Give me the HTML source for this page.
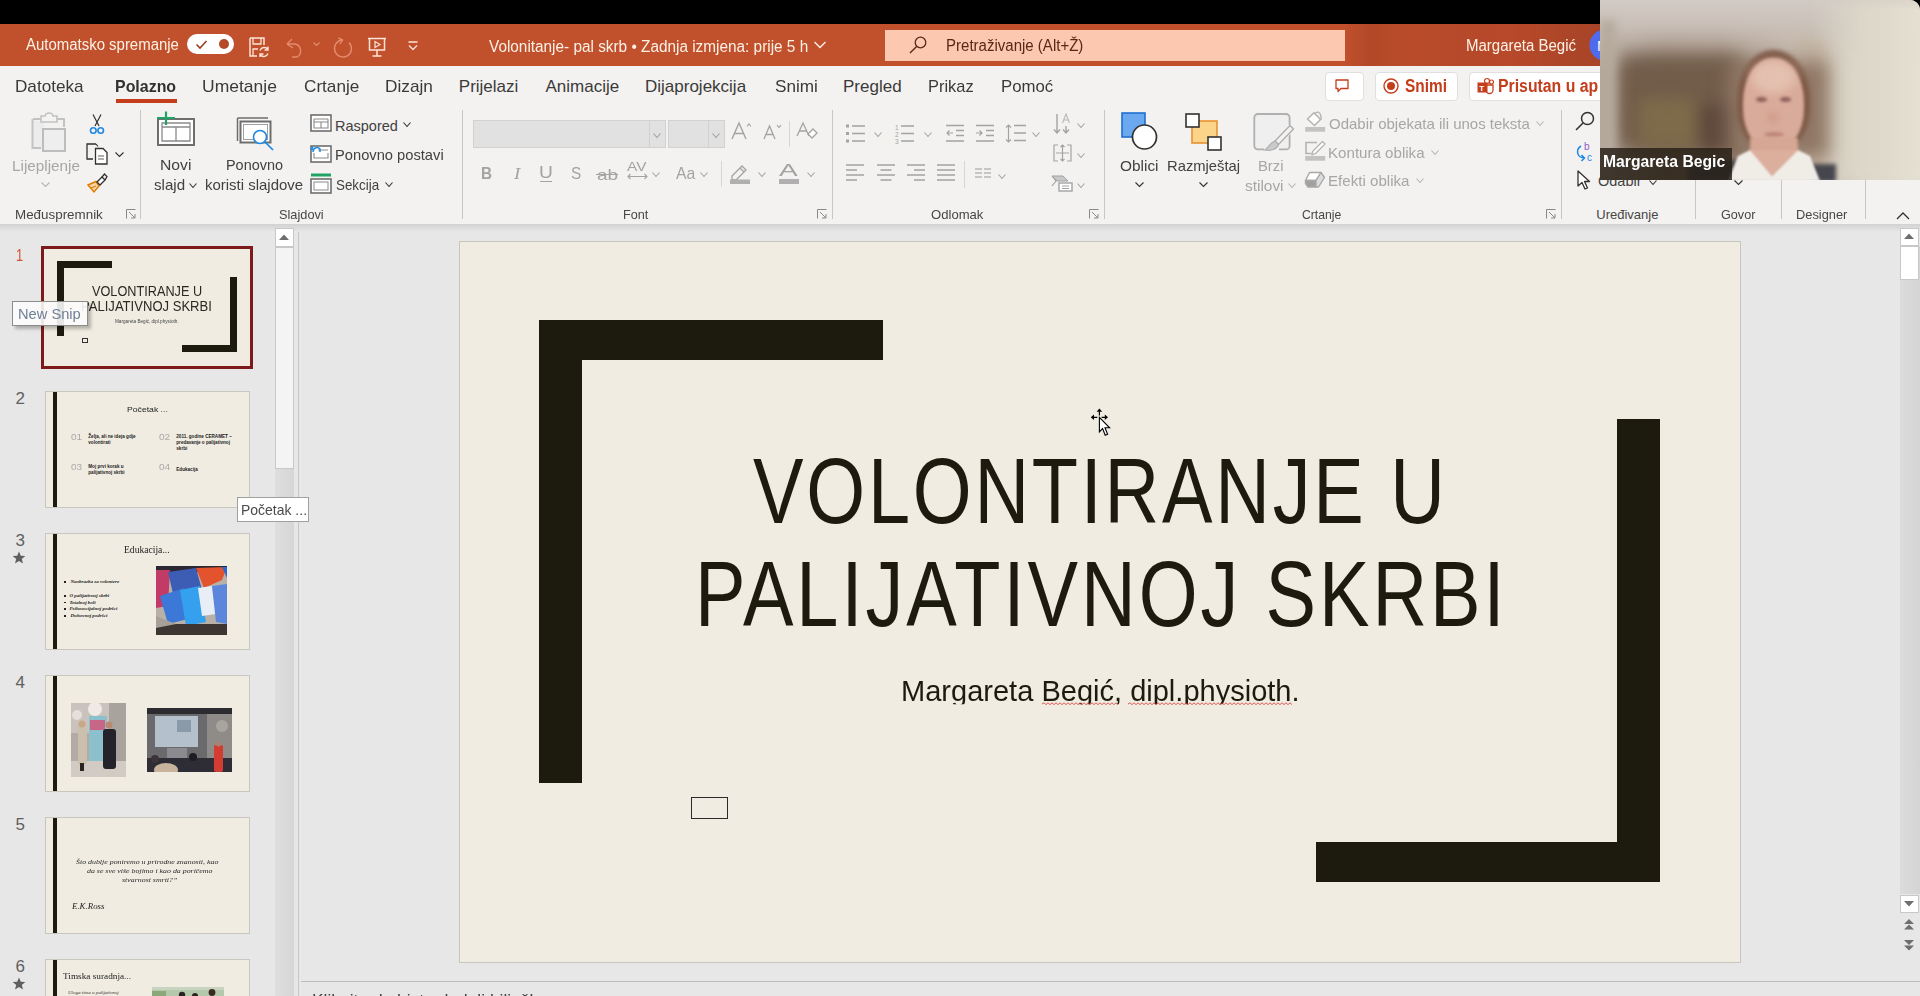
<!DOCTYPE html>
<html><head><meta charset="utf-8">
<style>
*{margin:0;padding:0;box-sizing:border-box}
html,body{width:1920px;height:996px;overflow:hidden;background:#e7e7e8;font-family:"Liberation Sans",sans-serif;color:#262626;position:relative}
.a{position:absolute}
.t{position:absolute;white-space:nowrap;transform-origin:0 0}
svg.a{overflow:visible}
</style></head><body>
<div class="a" style="left:0px;top:0px;width:1920px;height:24px;background:#000"></div><div class="a" style="left:0px;top:24px;width:1920px;height:42px;background:#c1502c"></div><div class="a" style="left:0px;top:66px;width:1920px;height:158px;background:#f3f2f1"></div><div class="a" style="left:0px;top:224px;width:1920px;height:8px;background:linear-gradient(#d2d2d2,#e7e7e8)"></div><div class="a" style="left:1345px;top:24px;width:255px;height:42px;background:linear-gradient(90deg,#c1502c 0%,#b24828 10%,#ba4c2a 25%,#b5492a 45%,#b8492a 65%,#ad4628 85%,#a84428 100%)"></div><div class="t " style="left:26.00px;top:37.45px;font-size:16px;line-height:16px;color:#fdf1e6;transform:scaleX(0.9344);">Automatsko spremanje</div><svg class="a" style="left:187px;top:34px;" width="47" height="20" viewBox="0 0 47 20"><rect x="0" y="0" width="47" height="20" rx="10" fill="#fff"/><path d="M9.5 10.5 L13 14 L19.5 7" fill="none" stroke="#9b3f22" stroke-width="1.6"/><circle cx="37" cy="10" r="5" fill="#b54a28"/></svg><svg class="a" style="left:249px;top:37px;" width="21" height="20" viewBox="0 0 21 20"><path d="M1 1 H15 V8 M1 1 V19 H8" fill="none" stroke="#fbe3d6" stroke-width="1.5"/><path d="M4 1 V7 H12 V1" fill="none" stroke="#fbe3d6" stroke-width="1.3"/><path d="M4 19 V12 H9" fill="none" stroke="#fbe3d6" stroke-width="1.3"/><path d="M11 13.5 A4.5 4.5 0 0 1 19 12.5 M19 9.5 V13 H15.5 M19 16.5 A4.5 4.5 0 0 1 11 17.5 M11 20 V17 H14.5" fill="none" stroke="#fbe3d6" stroke-width="1.4"/></svg><svg class="a" style="left:285px;top:37px;" width="20" height="21" viewBox="0 0 20 21"><path d="M2 7 L7 2 M2 7 L8 11 M2 7 H10 A7 7 0 0 1 12 20 L7 20" fill="none" stroke="#e48b6d" stroke-width="1.4"/></svg><svg class="a" style="left:313px;top:42px;" width="7" height="5" viewBox="0 0 7 5"><path d="M0.5 0.5 L3.5 3.5 L6.5 0.5" fill="none" stroke="#e48b6d" stroke-width="1.2"/></svg><svg class="a" style="left:332px;top:37px;" width="21" height="21" viewBox="0 0 21 21"><path d="M10.5 3 A8.5 8.5 0 1 0 17 5.5" fill="none" stroke="#e48b6d" stroke-width="1.4"/><path d="M6.5 1 L10.5 3 L8 7" fill="none" stroke="#e48b6d" stroke-width="1.4"/></svg><svg class="a" style="left:367px;top:37px;" width="20" height="20" viewBox="0 0 20 20"><path d="M1 1.5 H19 M2.5 1.5 V13 H17.5 V1.5" fill="none" stroke="#fbe3d6" stroke-width="1.5"/><path d="M8 4.5 L13 7.5 L8 10.5 Z" fill="none" stroke="#fbe3d6" stroke-width="1.2"/><path d="M10 13 V19 M5.5 19 H14.5" fill="none" stroke="#fbe3d6" stroke-width="1.5"/></svg><svg class="a" style="left:408px;top:41px;" width="10" height="10" viewBox="0 0 10 10"><path d="M0.5 1 H9.5 M1 4.5 L5 8.5 L9 4.5" fill="none" stroke="#fbe3d6" stroke-width="1.3"/></svg><div class="t " style="left:488.70px;top:39.45px;font-size:16px;line-height:16px;color:#fdf1e6;transform:scaleX(0.9588);">Volonitanje- pal skrb • Zadnja izmjena: prije 5 h</div><svg class="a" style="left:814px;top:41px;" width="12" height="8" viewBox="0 0 12 8"><path d="M0.5 1 L6 6.5 L11.5 1" fill="none" stroke="#fdf1e6" stroke-width="1.4"/></svg><div class="a" style="left:885px;top:30px;width:460px;height:31px;background:#fdc8b0"></div><svg class="a" style="left:909px;top:36px;" width="18" height="18" viewBox="0 0 18 18"><circle cx="11.5" cy="6.5" r="5.3" fill="none" stroke="#5a2717" stroke-width="1.3"/><path d="M7.6 10.4 L1 17" stroke="#5a2717" stroke-width="1.4"/></svg><div class="t " style="left:945.56px;top:37.75px;font-size:16px;line-height:16px;color:#5a2717;transform:scaleX(0.9390);">Pretraživanje (Alt+Ž)</div><div class="t " style="left:1465.76px;top:37.95px;font-size:16px;line-height:16px;color:#fdf1e6;transform:scaleX(0.9374);">Margareta Begić</div><svg class="a" style="left:1589px;top:29px;" width="32" height="32" viewBox="0 0 32 32"><circle cx="16" cy="16" r="15.5" fill="#4f6bed"/><text x="8" y="22" font-size="15" fill="#fff" font-family="Liberation Sans">M</text></svg><div class="t " style="left:15.29px;top:77.91px;font-size:17px;line-height:17px;color:#3b3a39;transform:scaleX(1.0076);">Datoteka</div><div class="t " style="left:115.06px;top:77.91px;font-size:17px;line-height:17px;color:#323130;font-weight:bold;transform:scaleX(0.9375);">Polazno</div><div class="t " style="left:201.97px;top:77.91px;font-size:17px;line-height:17px;color:#3b3a39;transform:scaleX(1.0294);">Umetanje</div><div class="t " style="left:303.70px;top:77.91px;font-size:17px;line-height:17px;color:#3b3a39;transform:scaleX(1.0083);">Crtanje</div><div class="t " style="left:384.79px;top:77.91px;font-size:17px;line-height:17px;color:#3b3a39;transform:scaleX(1.0134);">Dizajn</div><div class="t " style="left:458.80px;top:77.91px;font-size:17px;line-height:17px;color:#3b3a39;">Prijelazi</div><div class="t " style="left:545.50px;top:77.91px;font-size:17px;line-height:17px;color:#3b3a39;">Animacije</div><div class="t " style="left:645.00px;top:77.91px;font-size:17px;line-height:17px;color:#3b3a39;">Dijaprojekcija</div><div class="t " style="left:774.70px;top:77.91px;font-size:17px;line-height:17px;color:#3b3a39;transform:scaleX(1.0088);">Snimi</div><div class="t " style="left:843.00px;top:77.91px;font-size:17px;line-height:17px;color:#3b3a39;">Pregled</div><div class="t " style="left:928.33px;top:77.91px;font-size:17px;line-height:17px;color:#3b3a39;transform:scaleX(0.9665);">Prikaz</div><div class="t " style="left:1000.91px;top:77.91px;font-size:17px;line-height:17px;color:#3b3a39;transform:scaleX(0.9865);">Pomoć</div><div class="a" style="left:116px;top:99px;width:61px;height:3.5px;background:#c43e1c"></div><div class="a" style="left:1325px;top:72px;width:39px;height:29px;background:#fff;border:1px solid #e1dfdd;border-radius:4px"></div><svg class="a" style="left:1335px;top:79px;" width="14" height="14" viewBox="0 0 14 14"><path d="M1 1 H13 V9.5 H6 L3 12.5 V9.5 H1 Z" fill="none" stroke="#c43e1c" stroke-width="1.3" stroke-linejoin="round"/></svg><div class="a" style="left:1375px;top:72px;width:83px;height:29px;background:#fff;border:1px solid #e1dfdd;border-radius:4px"></div><svg class="a" style="left:1383px;top:78px;" width="16" height="16" viewBox="0 0 16 16"><circle cx="8" cy="8" r="7" fill="none" stroke="#c43e1c" stroke-width="1.4"/><circle cx="8" cy="8" r="4" fill="#c43e1c"/></svg><div class="t " style="left:1404.70px;top:76.56px;font-size:18px;line-height:18px;color:#c43e1c;font-weight:bold;transform:scaleX(0.8561);">Snimi</div><div class="a" style="left:1469px;top:72px;width:200px;height:29px;background:#fff;border:1px solid #e1dfdd;border-radius:4px"></div><svg class="a" style="left:1477px;top:78px;" width="17" height="16" viewBox="0 0 17 16"><rect x="0.5" y="4.5" width="10" height="10" fill="#c43e1c"/><circle cx="10" cy="3" r="2.5" fill="none" stroke="#c43e1c" stroke-width="1.2"/><circle cx="14.5" cy="4" r="2" fill="none" stroke="#c43e1c" stroke-width="1.2"/><path d="M9 7 H16 V12 A3.5 3.5 0 0 1 9 12" fill="none" stroke="#c43e1c" stroke-width="1.3"/><text x="2.3" y="12.5" font-size="8" font-weight="bold" fill="#fff" font-family="Liberation Sans">T</text></svg><div class="t " style="left:1497.82px;top:76.56px;font-size:18px;line-height:18px;color:#c43e1c;font-weight:bold;transform:scaleX(0.8786);">Prisutan u ap</div><svg class="a" style="left:31px;top:113px;" width="36" height="39" viewBox="0 0 36 39"><path d="M2 6 H10 M26 6 H33 V14" fill="none" stroke="#c2c2c2" stroke-width="2"/><path d="M1.5 6 V35 H10" fill="none" stroke="#c2c2c2" stroke-width="2"/><rect x="3" y="8" width="10" height="26" fill="#ececec"/><path d="M10 9 V3 H14 A4 3 0 0 1 22 3 H26 V9 Z" fill="#f3f3f3" stroke="#c2c2c2" stroke-width="1.6"/><rect x="12" y="16" width="22" height="22" fill="#eeeeee" stroke="#bdbdbd" stroke-width="2"/></svg><div class="t " style="left:11.65px;top:158.52px;font-size:14.5px;line-height:14.5px;color:#a6a6a6;transform:scaleX(1.0532);">Lijepljenje</div><svg class="a" style="left:41px;top:182px;" width="9" height="5" viewBox="0 0 9 5"><path d="M0.5 0.5 L4.5 4.5 L8.5 0.5" fill="none" stroke="#b5b5b5" stroke-width="1.1"/></svg><svg class="a" style="left:89px;top:114px;" width="16" height="21" viewBox="0 0 16 21"><path d="M4 0.5 L10 12 M12 0.5 L6 12" fill="none" stroke="#323130" stroke-width="1.2"/><circle cx="4.3" cy="16.5" r="2.8" fill="none" stroke="#1e88e5" stroke-width="1.6"/><circle cx="11.7" cy="16.5" r="2.8" fill="none" stroke="#1e88e5" stroke-width="1.6"/></svg><svg class="a" style="left:86px;top:143px;" width="22" height="22" viewBox="0 0 22 22"><path d="M10 1 H1 V16 H7" fill="none" stroke="#323130" stroke-width="1.3"/><path d="M10 1 L12 3.5" fill="none" stroke="#323130" stroke-width="1.2"/><path d="M9.5 5.5 H17 L21 9.5 V21 H9.5 Z" fill="#fff" stroke="#323130" stroke-width="1.3"/><path d="M12 13 H18 M12 16 H18" stroke="#605e5c" stroke-width="1.2"/></svg><svg class="a" style="left:115px;top:152px;" width="9" height="5" viewBox="0 0 9 5"><path d="M0.5 0.5 L4.5 4.5 L8.5 0.5" fill="none" stroke="#323130" stroke-width="1.1"/></svg><svg class="a" style="left:86px;top:173px;" width="22" height="20" viewBox="0 0 22 20"><path d="M2 12 L10 8.5 L13 13 L8 19 Z" fill="#fbd5a6" stroke="#e07b00" stroke-width="1.4"/><path d="M5 15 L10 13" stroke="#e07b00" stroke-width="1.2"/><path d="M11 9 L16 4 L19 7 L14 12 Z" fill="#fff" stroke="#323130" stroke-width="1.3"/><path d="M16 4 L18.5 1 L21 3.5 L19 7" fill="none" stroke="#323130" stroke-width="1.3"/></svg><div class="t " style="left:15.27px;top:207.89px;font-size:13px;line-height:13px;color:#484644;transform:scaleX(1.0300);">Međuspremnik</div><svg class="a" style="left:126px;top:209px;" width="10" height="10" viewBox="0 0 10 10"><path d="M0.5 0.5 H9.5 M0.5 0.5 V9.5" fill="none" stroke="#8a8886" stroke-width="1"/><path d="M3 3 L9 9 M5 9 H9 V5" fill="none" stroke="#8a8886" stroke-width="1"/></svg><div class="a" style="left:140px;top:110px;width:1px;height:109px;background:#c8c6c4"></div><svg class="a" style="left:156px;top:111px;" width="40" height="36" viewBox="0 0 40 36"><rect x="2" y="8" width="36" height="26" fill="#fff" stroke="#6e6e6e" stroke-width="2"/><path d="M6 12 H34 V30 H6 Z M20 16 V30 M6 16 H34" fill="none" stroke="#8a8a8a" stroke-width="1.3"/><path d="M10 0.5 V14 M1 7 H19" stroke="#21a366" stroke-width="2.2"/></svg><div class="t " style="left:160.42px;top:158.02px;font-size:14.5px;line-height:14.5px;color:#424140;transform:scaleX(1.0833);">Novi</div><div class="t " style="left:154.00px;top:177.72px;font-size:14.5px;line-height:14.5px;color:#424140;transform:scaleX(1.0418);">slajd</div><svg class="a" style="left:189px;top:183px;" width="8" height="5" viewBox="0 0 8 5"><path d="M0.5 0.5 L4.0 4.5 L7.5 0.5" fill="none" stroke="#323130" stroke-width="1.1"/></svg><svg class="a" style="left:236px;top:117px;" width="41" height="36" viewBox="0 0 41 36"><path d="M1.5 1 H32 M1.5 1 V24" fill="none" stroke="#6e6e6e" stroke-width="1.5"/><rect x="4.5" y="4.5" width="30" height="21" fill="#fff" stroke="#6e6e6e" stroke-width="2"/><rect x="7.5" y="7.5" width="24" height="15" fill="#fff" stroke="#a0a0a0" stroke-width="1"/><circle cx="24" cy="20" r="6.5" fill="#fff" stroke="#1e88e5" stroke-width="1.6"/><path d="M28.5 24.5 L37 33" stroke="#1e88e5" stroke-width="1.7"/></svg><div class="t " style="left:225.80px;top:158.02px;font-size:14.5px;line-height:14.5px;color:#424140;transform:scaleX(0.9950);">Ponovno</div><div class="t " style="left:205.30px;top:177.72px;font-size:14.5px;line-height:14.5px;color:#424140;transform:scaleX(1.0313);">koristi slajdove</div><svg class="a" style="left:310px;top:114px;" width="22" height="19" viewBox="0 0 22 19"><rect x="1" y="1" width="20" height="16" fill="#fff" stroke="#6e6e6e" stroke-width="1.6"/><path d="M4 5 H18 M4 5 V14 H18 V5 M11 8 V14 M4 8 H18" fill="none" stroke="#8a8a8a" stroke-width="1.1"/></svg><div class="t " style="left:335.00px;top:118.52px;font-size:14.5px;line-height:14.5px;color:#424140;">Raspored</div><svg class="a" style="left:403px;top:122px;" width="8" height="5" viewBox="0 0 8 5"><path d="M0.5 0.5 L4.0 4.5 L7.5 0.5" fill="none" stroke="#323130" stroke-width="1.1"/></svg><svg class="a" style="left:310px;top:143px;" width="22" height="20" viewBox="0 0 22 20"><rect x="1" y="3" width="20" height="16" fill="#fff" stroke="#6e6e6e" stroke-width="1.6"/><path d="M8 7 H18 M4 10 V15 H18 V10" fill="none" stroke="#8a8a8a" stroke-width="1.1"/><path d="M3 9 A4 4 0 0 1 10 6 L10 9 M3 3.5 L1.5 6 L4.5 7" fill="none" stroke="#1e88e5" stroke-width="1.5"/></svg><div class="t " style="left:334.99px;top:148.22px;font-size:14.5px;line-height:14.5px;color:#424140;transform:scaleX(1.0133);">Ponovno postavi</div><svg class="a" style="left:310px;top:173px;" width="22" height="21" viewBox="0 0 22 21"><rect x="1" y="0.5" width="20" height="3" fill="#21a366"/><rect x="1" y="6" width="20" height="14" fill="#fff" stroke="#6e6e6e" stroke-width="1.6"/><rect x="4" y="9" width="14" height="8" fill="none" stroke="#8a8a8a" stroke-width="1"/></svg><div class="t " style="left:336.00px;top:177.72px;font-size:14.5px;line-height:14.5px;color:#424140;transform:scaleX(0.9228);">Sekcija</div><svg class="a" style="left:385px;top:182px;" width="8" height="5" viewBox="0 0 8 5"><path d="M0.5 0.5 L4.0 4.5 L7.5 0.5" fill="none" stroke="#323130" stroke-width="1.1"/></svg><div class="t " style="left:279.20px;top:207.59px;font-size:13px;line-height:13px;color:#484644;transform:scaleX(0.9817);">Slajdovi</div><div class="a" style="left:462px;top:110px;width:1px;height:109px;background:#c8c6c4"></div><div class="a" style="left:473px;top:120px;width:193px;height:28px;background:#e1e1e1;border:1px solid #d1d1d1"></div><div class="a" style="left:649px;top:121px;width:1px;height:26px;background:#d1d1d1"></div><svg class="a" style="left:653px;top:133px;" width="8" height="5" viewBox="0 0 8 5"><path d="M0.5 0.5 L4.0 4.5 L7.5 0.5" fill="none" stroke="#a0a0a0" stroke-width="1.1"/></svg><div class="a" style="left:668px;top:120px;width:57px;height:28px;background:#e1e1e1;border:1px solid #d1d1d1"></div><div class="a" style="left:708px;top:121px;width:1px;height:26px;background:#d1d1d1"></div><svg class="a" style="left:712px;top:133px;" width="8" height="5" viewBox="0 0 8 5"><path d="M0.5 0.5 L4.0 4.5 L7.5 0.5" fill="none" stroke="#a0a0a0" stroke-width="1.1"/></svg><svg class="a" style="left:731px;top:122px;" width="22" height="18" viewBox="0 0 22 18"><path d="M1 17 L8 1 L15 17 M3.5 11.5 H12.5" fill="none" stroke="#a3a3a3" stroke-width="1.4"/><path d="M16 4.5 L18 2 L20 4.5" fill="none" stroke="#a3a3a3" stroke-width="1.1"/></svg><svg class="a" style="left:763px;top:124px;" width="20" height="16" viewBox="0 0 20 16"><path d="M1 15 L6.5 2 L12 15 M3 10.5 H10" fill="none" stroke="#a3a3a3" stroke-width="1.3"/><path d="M14 1 L16 3.5 L18 1" fill="none" stroke="#a3a3a3" stroke-width="1.1"/></svg><div class="a" style="left:789px;top:121px;width:1px;height:26px;background:#d6d6d6"></div><svg class="a" style="left:796px;top:122px;" width="23" height="18" viewBox="0 0 23 18"><path d="M1 14 L7 1 L13 14 M3 9 H11" fill="none" stroke="#a3a3a3" stroke-width="1.3"/><path d="M12 12 L17 7 L21 11 L16 16 Z" fill="#fff" stroke="#a3a3a3" stroke-width="1.3"/></svg><div class="t " style="left:480.90px;top:164.81px;font-size:17px;line-height:17px;color:#a3a3a3;font-weight:bold;transform:scaleX(0.9000);">B</div><div class="t " style="left:513.51px;top:164.96px;font-size:17px;line-height:17px;color:#a3a3a3;font-family:'Liberation Serif',serif;font-style:italic;transform:scaleX(1.1125);">I</div><div class="t " style="left:538.80px;top:164.95px;font-size:16px;line-height:16px;color:#a3a3a3;transform:scaleX(1.2000);">U</div><div class="a" style="left:540px;top:180.5px;width:12px;height:1.3px;background:#a3a3a3"></div><div class="t " style="left:570.80px;top:164.81px;font-size:17px;line-height:17px;color:#a3a3a3;transform:scaleX(0.9000);">S</div><div class="t " style="left:596.60px;top:166.50px;font-size:15px;line-height:15px;color:#a3a3a3;transform:scaleX(1.2667);">ab</div><div class="a" style="left:596px;top:174px;width:22px;height:1.2px;background:#a3a3a3"></div><div class="t " style="left:627.20px;top:159.99px;font-size:13px;line-height:13px;color:#a3a3a3;transform:scaleX(1.1852);">AV</div><svg class="a" style="left:627px;top:173px;" width="21" height="7" viewBox="0 0 21 7"><path d="M1 3.5 H20 M3.5 1 L1 3.5 L3.5 6 M17.5 1 L20 3.5 L17.5 6" fill="none" stroke="#a3a3a3" stroke-width="1.1"/></svg><svg class="a" style="left:652px;top:172px;" width="8" height="5" viewBox="0 0 8 5"><path d="M0.5 0.5 L4.0 4.5 L7.5 0.5" fill="none" stroke="#a3a3a3" stroke-width="1.1"/></svg><div class="t " style="left:675.70px;top:164.81px;font-size:17px;line-height:17px;color:#a3a3a3;transform:scaleX(0.9279);">Aa</div><svg class="a" style="left:700px;top:172px;" width="8" height="5" viewBox="0 0 8 5"><path d="M0.5 0.5 L4.0 4.5 L7.5 0.5" fill="none" stroke="#a3a3a3" stroke-width="1.1"/></svg><div class="a" style="left:721px;top:161px;width:1px;height:26px;background:#d6d6d6"></div><svg class="a" style="left:729px;top:163px;" width="22" height="21" viewBox="0 0 22 21"><path d="M3 13 L13 3 L17 7 L7 17 L3 17 Z M11 5 L15 9" fill="none" stroke="#a3a3a3" stroke-width="1.3"/><rect x="1" y="16.5" width="20" height="4.5" fill="#b0b0b0"/></svg><svg class="a" style="left:758px;top:172px;" width="8" height="5" viewBox="0 0 8 5"><path d="M0.5 0.5 L4.0 4.5 L7.5 0.5" fill="none" stroke="#a3a3a3" stroke-width="1.1"/></svg><div class="t " style="left:779.00px;top:162.11px;font-size:17px;line-height:17px;color:#a3a3a3;transform:scaleX(1.6500);">A</div><div class="a" style="left:779px;top:179px;width:20px;height:4.5px;background:#b0b0b0"></div><svg class="a" style="left:807px;top:172px;" width="8" height="5" viewBox="0 0 8 5"><path d="M0.5 0.5 L4.0 4.5 L7.5 0.5" fill="none" stroke="#a3a3a3" stroke-width="1.1"/></svg><div class="t " style="left:623.33px;top:207.79px;font-size:13px;line-height:13px;color:#484644;transform:scaleX(0.9724);">Font</div><svg class="a" style="left:817px;top:209px;" width="10" height="10" viewBox="0 0 10 10"><path d="M0.5 0.5 H9.5 M0.5 0.5 V9.5" fill="none" stroke="#8a8886" stroke-width="1"/><path d="M3 3 L9 9 M5 9 H9 V5" fill="none" stroke="#8a8886" stroke-width="1"/></svg><div class="a" style="left:831.7px;top:110px;width:1px;height:109px;background:#c8c6c4"></div><svg class="a" style="left:846px;top:124px;" width="20" height="19" viewBox="0 0 20 19"><rect x="0" y="0.5" width="3" height="3" fill="#a3a3a3"/><rect x="0" y="8" width="3" height="3" fill="#a3a3a3"/><rect x="0" y="15.5" width="3" height="3" fill="#a3a3a3"/><path d="M6 2 H19 M6 9.5 H19 M6 17 H19" stroke="#a3a3a3" stroke-width="1.6"/></svg><svg class="a" style="left:874px;top:132px;" width="8" height="5" viewBox="0 0 8 5"><path d="M0.5 0.5 L4.0 4.5 L7.5 0.5" fill="none" stroke="#a3a3a3" stroke-width="1.1"/></svg><svg class="a" style="left:895px;top:123px;" width="20" height="21" viewBox="0 0 20 21"><text x="0" y="6.5" font-size="6.5" fill="#a3a3a3" font-family="Liberation Sans">1</text><text x="0" y="14" font-size="6.5" fill="#a3a3a3" font-family="Liberation Sans">2</text><text x="0" y="21" font-size="6.5" fill="#a3a3a3" font-family="Liberation Sans">3</text><path d="M6 3 H19 M6 10.5 H19 M6 18 H19" stroke="#a3a3a3" stroke-width="1.6"/></svg><svg class="a" style="left:924px;top:132px;" width="8" height="5" viewBox="0 0 8 5"><path d="M0.5 0.5 L4.0 4.5 L7.5 0.5" fill="none" stroke="#a3a3a3" stroke-width="1.1"/></svg><svg class="a" style="left:946px;top:124px;" width="18" height="19" viewBox="0 0 18 19"><path d="M0 1.5 H18 M10 6.5 H18 M10 11.5 H18 M0 17 H18" stroke="#a3a3a3" stroke-width="1.6"/><path d="M7 9 H1 M3.5 6.5 L1 9 L3.5 11.5" fill="none" stroke="#a3a3a3" stroke-width="1.2"/></svg><svg class="a" style="left:976px;top:124px;" width="18" height="19" viewBox="0 0 18 19"><path d="M0 1.5 H18 M10 6.5 H18 M10 11.5 H18 M0 17 H18" stroke="#a3a3a3" stroke-width="1.6"/><path d="M0 9 H6 M3.5 6.5 L6 9 L3.5 11.5" fill="none" stroke="#a3a3a3" stroke-width="1.2"/></svg><svg class="a" style="left:1005px;top:124px;" width="21" height="20" viewBox="0 0 21 20"><path d="M9 1.5 H21 M9 9 H21 M9 16.5 H21" stroke="#a3a3a3" stroke-width="1.6"/><path d="M3.5 1 V18 M1 3.5 L3.5 1 L6 3.5 M1 15.5 L3.5 18 L6 15.5" fill="none" stroke="#a3a3a3" stroke-width="1.2"/></svg><svg class="a" style="left:1032px;top:132px;" width="8" height="5" viewBox="0 0 8 5"><path d="M0.5 0.5 L4.0 4.5 L7.5 0.5" fill="none" stroke="#a3a3a3" stroke-width="1.1"/></svg><svg class="a" style="left:846px;top:164px;" width="19" height="18" viewBox="0 0 19 18"><path d="M0 1 H18 M0 6 H11 M0 11 H18 M0 16 H11" stroke="#a3a3a3" stroke-width="1.6"/></svg><svg class="a" style="left:877px;top:164px;" width="19" height="18" viewBox="0 0 19 18"><path d="M0 1 H18 M3.5 6 H14.5 M0 11 H18 M3.5 16 H14.5" stroke="#a3a3a3" stroke-width="1.6"/></svg><svg class="a" style="left:907px;top:164px;" width="19" height="18" viewBox="0 0 19 18"><path d="M0 1 H18 M7 6 H18 M0 11 H18 M7 16 H18" stroke="#a3a3a3" stroke-width="1.6"/></svg><svg class="a" style="left:937px;top:164px;" width="19" height="18" viewBox="0 0 19 18"><path d="M0 1 H18 M0 6 H18 M0 11 H18 M0 16 H18" stroke="#a3a3a3" stroke-width="1.6"/></svg><div class="a" style="left:964px;top:161px;width:1px;height:27px;background:#d6d6d6"></div><svg class="a" style="left:975px;top:168px;" width="17" height="10" viewBox="0 0 17 10"><path d="M0 1 H7 M9 1 H16 M0 5 H7 M9 5 H16 M0 9 H7 M9 9 H16" stroke="#b8b8b8" stroke-width="1.4"/></svg><svg class="a" style="left:998px;top:174px;" width="8" height="5" viewBox="0 0 8 5"><path d="M0.5 0.5 L4.0 4.5 L7.5 0.5" fill="none" stroke="#a3a3a3" stroke-width="1.1"/></svg><svg class="a" style="left:1053px;top:113px;" width="19" height="22" viewBox="0 0 19 22"><path d="M4 1 V20 M1 16.5 L4 20 L7 16.5 M13 13 V20 M10 16.5 L13 20 L16 16.5" fill="none" stroke="#a3a3a3" stroke-width="1.4"/><path d="M9.5 10 L13 1 L16.5 10 M10.5 7 H15.5" fill="none" stroke="#b8b8b8" stroke-width="1.1"/></svg><svg class="a" style="left:1077px;top:123px;" width="8" height="5" viewBox="0 0 8 5"><path d="M0.5 0.5 L4.0 4.5 L7.5 0.5" fill="none" stroke="#a3a3a3" stroke-width="1.1"/></svg><svg class="a" style="left:1053px;top:144px;" width="19" height="19" viewBox="0 0 19 19"><path d="M5 1 H1 V17 H5 M14 1 H18 V17 H14 M3 9 H16 M9.5 1 V17 M7.5 3 L9.5 1 L11.5 3 M7.5 15 L9.5 17 L11.5 15" fill="none" stroke="#a3a3a3" stroke-width="1.2"/></svg><svg class="a" style="left:1077px;top:153px;" width="8" height="5" viewBox="0 0 8 5"><path d="M0.5 0.5 L4.0 4.5 L7.5 0.5" fill="none" stroke="#a3a3a3" stroke-width="1.1"/></svg><svg class="a" style="left:1051px;top:175px;" width="22" height="17" viewBox="0 0 22 17"><path d="M1 1 H12 L17 6 H6 Z" fill="#c8c8c8" stroke="#a3a3a3" stroke-width="1"/><path d="M1 1 L5 6 L1 11" fill="none" stroke="#a3a3a3" stroke-width="1.2"/><rect x="8" y="8" width="13" height="8" fill="#fff" stroke="#a3a3a3" stroke-width="1.4"/><path d="M11 11 H18 M11 13.5 H18" stroke="#a3a3a3" stroke-width="1"/></svg><svg class="a" style="left:1077px;top:183px;" width="8" height="5" viewBox="0 0 8 5"><path d="M0.5 0.5 L4.0 4.5 L7.5 0.5" fill="none" stroke="#a3a3a3" stroke-width="1.1"/></svg><div class="t " style="left:931.40px;top:207.79px;font-size:13px;line-height:13px;color:#484644;transform:scaleX(1.0073);">Odlomak</div><svg class="a" style="left:1089px;top:209px;" width="10" height="10" viewBox="0 0 10 10"><path d="M0.5 0.5 H9.5 M0.5 0.5 V9.5" fill="none" stroke="#8a8886" stroke-width="1"/><path d="M3 3 L9 9 M5 9 H9 V5" fill="none" stroke="#8a8886" stroke-width="1"/></svg><div class="a" style="left:1103.5px;top:110px;width:1px;height:109px;background:#c8c6c4"></div><svg class="a" style="left:1121px;top:112px;" width="38" height="39" viewBox="0 0 38 39"><rect x="1" y="1" width="23" height="24" fill="#6aa8f0" stroke="#1e70d0" stroke-width="1.6"/><circle cx="23.5" cy="25" r="12" fill="#fff" stroke="#323130" stroke-width="1.7"/></svg><div class="t " style="left:1120.30px;top:158.52px;font-size:14.5px;line-height:14.5px;color:#424140;transform:scaleX(1.0628);">Oblici</div><svg class="a" style="left:1135px;top:182px;" width="9" height="5" viewBox="0 0 9 5"><path d="M0.5 0.5 L4.5 4.5 L8.5 0.5" fill="none" stroke="#323130" stroke-width="1.1"/></svg><svg class="a" style="left:1185px;top:113px;" width="38" height="38" viewBox="0 0 38 38"><rect x="7" y="8" width="25" height="22" fill="#fbd48a" stroke="#e8912d" stroke-width="1.6"/><rect x="1" y="1" width="13" height="13" fill="#fff" stroke="#323130" stroke-width="1.6"/><rect x="23" y="24" width="13" height="13" fill="#fff" stroke="#323130" stroke-width="1.6"/></svg><div class="t " style="left:1166.98px;top:158.52px;font-size:14.5px;line-height:14.5px;color:#424140;transform:scaleX(1.0185);">Razmještaj</div><svg class="a" style="left:1199px;top:182px;" width="9" height="5" viewBox="0 0 9 5"><path d="M0.5 0.5 L4.5 4.5 L8.5 0.5" fill="none" stroke="#323130" stroke-width="1.1"/></svg><svg class="a" style="left:1253px;top:112px;" width="42" height="40" viewBox="0 0 42 40"><rect x="1.3" y="2" width="35.3" height="35.4" rx="3.5" fill="#efefef" stroke="#b0b0b0" stroke-width="1.8"/><path d="M38.5 15.5 L23 31" stroke="#f3f2f1" stroke-width="8"/><path d="M11 38 L26 38" stroke="#f3f2f1" stroke-width="4"/><path d="M37 13.5 L40.5 17 L25.5 32.5 L22 29 Z" fill="#f3f2f1" stroke="#b0b0b0" stroke-width="1.5" stroke-linejoin="round"/><path d="M22 29 L25.5 32.5 C24 37 18 39.5 11.5 38 C15.5 36.5 16 31 22 29 Z" fill="#cacaca" stroke="#b0b0b0" stroke-width="1.2"/></svg><div class="t " style="left:1258.38px;top:158.52px;font-size:14.5px;line-height:14.5px;color:#a6a6a6;transform:scaleX(1.0189);">Brzi</div><div class="t " style="left:1245.30px;top:178.72px;font-size:14.5px;line-height:14.5px;color:#a6a6a6;transform:scaleX(1.0628);">stilovi</div><svg class="a" style="left:1288px;top:183px;" width="8" height="5" viewBox="0 0 8 5"><path d="M0.5 0.5 L4.0 4.5 L7.5 0.5" fill="none" stroke="#b5b5b5" stroke-width="1.1"/></svg><svg class="a" style="left:1304px;top:111px;" width="22" height="22" viewBox="0 0 22 22"><path d="M3.5 8 L10 1.8 L16.5 8.5 L10.5 14.5 Z" fill="#fff" stroke="#b3b3b3" stroke-width="1.5" stroke-linejoin="round"/><path d="M11 2.5 C13 0 16 1 16.5 4 L17.5 8.5" fill="none" stroke="#b3b3b3" stroke-width="1.3"/><rect x="1.2" y="16" width="20" height="4.7" fill="#c2c2c2"/></svg><div class="t " style="left:1329.20px;top:116.72px;font-size:14.5px;line-height:14.5px;color:#a6a6a6;transform:scaleX(1.0339);">Odabir objekata ili unos teksta</div><svg class="a" style="left:1536px;top:121px;" width="8" height="5" viewBox="0 0 8 5"><path d="M0.5 0.5 L4.0 4.5 L7.5 0.5" fill="none" stroke="#b5b5b5" stroke-width="1.1"/></svg><svg class="a" style="left:1304px;top:140px;" width="22" height="22" viewBox="0 0 22 22"><path d="M13 2.5 H2 V13.5 H7.5" fill="none" stroke="#b3b3b3" stroke-width="1.6"/><path d="M18.5 1.5 L21 4 L11.5 13.5 L7.8 14.8 L9 11 Z" fill="#fff" stroke="#b3b3b3" stroke-width="1.3" stroke-linejoin="round"/><rect x="1.2" y="16" width="20" height="4.7" fill="#c2c2c2"/></svg><div class="t " style="left:1327.96px;top:145.52px;font-size:14.5px;line-height:14.5px;color:#a6a6a6;transform:scaleX(1.0417);">Kontura oblika</div><svg class="a" style="left:1431px;top:150px;" width="8" height="5" viewBox="0 0 8 5"><path d="M0.5 0.5 L4.0 4.5 L7.5 0.5" fill="none" stroke="#b5b5b5" stroke-width="1.1"/></svg><svg class="a" style="left:1304px;top:171px;" width="22" height="18" viewBox="0 0 22 18"><path d="M5.5 1.5 L17 1.5 L12 9.5 L1.5 9.5 Z" fill="#fff" stroke="#a8a8a8" stroke-width="1.4" stroke-linejoin="round"/><path d="M1.5 9.5 L12 9.5 L12 16 L4 16 L1.5 12.5 Z" fill="#a0a0a0" stroke="#a8a8a8" stroke-width="1.4" stroke-linejoin="round"/><path d="M12 9.5 L17 1.5 L20.5 6.5 L14.5 16 L12 16 Z" fill="#dcdcdc" stroke="#a8a8a8" stroke-width="1.4" stroke-linejoin="round"/></svg><div class="t " style="left:1327.96px;top:174.02px;font-size:14.5px;line-height:14.5px;color:#a6a6a6;transform:scaleX(1.0421);">Efekti oblika</div><svg class="a" style="left:1416px;top:178px;" width="8" height="5" viewBox="0 0 8 5"><path d="M0.5 0.5 L4.0 4.5 L7.5 0.5" fill="none" stroke="#b5b5b5" stroke-width="1.1"/></svg><div class="t " style="left:1301.80px;top:207.79px;font-size:13px;line-height:13px;color:#484644;transform:scaleX(0.9382);">Crtanje</div><svg class="a" style="left:1546px;top:209px;" width="10" height="10" viewBox="0 0 10 10"><path d="M0.5 0.5 H9.5 M0.5 0.5 V9.5" fill="none" stroke="#8a8886" stroke-width="1"/><path d="M3 3 L9 9 M5 9 H9 V5" fill="none" stroke="#8a8886" stroke-width="1"/></svg><div class="a" style="left:1560.5px;top:110px;width:1px;height:109px;background:#c8c6c4"></div><svg class="a" style="left:1575px;top:111px;" width="20" height="20" viewBox="0 0 20 20"><circle cx="12.5" cy="7.5" r="6" fill="none" stroke="#323130" stroke-width="1.5"/><path d="M8 12 L1 19" stroke="#323130" stroke-width="1.6"/></svg><svg class="a" style="left:1575px;top:141px;" width="22" height="22" viewBox="0 0 22 22"><text x="9" y="9" font-size="10" fill="#8b5cc7" font-family="Liberation Sans">b</text><text x="12" y="20" font-size="10" fill="#1e88e5" font-family="Liberation Sans">c</text><path d="M6 5 C1 8 1 16 9 17 M6.5 14 L9.5 17 L6.5 20" fill="none" stroke="#1e88e5" stroke-width="1.5"/></svg><svg class="a" style="left:1577px;top:170px;" width="14" height="20" viewBox="0 0 14 20"><path d="M1 1 V16 L5 12.5 L8 19 L10.5 18 L7.5 11.5 H12.5 Z" fill="#fff" stroke="#323130" stroke-width="1.3" stroke-linejoin="round"/></svg><div class="t " style="left:1598.00px;top:174.02px;font-size:14.5px;line-height:14.5px;color:#424140;">Odabir</div><svg class="a" style="left:1649px;top:180px;" width="8" height="5" viewBox="0 0 8 5"><path d="M0.5 0.5 L4.0 4.5 L7.5 0.5" fill="none" stroke="#323130" stroke-width="1.1"/></svg><div class="t " style="left:1596.30px;top:207.59px;font-size:13px;line-height:13px;color:#484644;">Uređivanje</div><div class="a" style="left:1695px;top:110px;width:1px;height:109px;background:#c8c6c4"></div><svg class="a" style="left:1734px;top:180px;" width="9" height="5" viewBox="0 0 9 5"><path d="M0.5 0.5 L4.5 4.5 L8.5 0.5" fill="none" stroke="#323130" stroke-width="1.1"/></svg><div class="t " style="left:1720.70px;top:207.59px;font-size:13px;line-height:13px;color:#484644;transform:scaleX(0.9703);">Govor</div><div class="a" style="left:1781px;top:110px;width:1px;height:109px;background:#c8c6c4"></div><div class="t " style="left:1796.31px;top:207.59px;font-size:13px;line-height:13px;color:#484644;transform:scaleX(0.9865);">Designer</div><div class="a" style="left:1865px;top:110px;width:1px;height:109px;background:#c8c6c4"></div><svg class="a" style="left:1896px;top:212px;" width="14" height="8" viewBox="0 0 14 8"><path d="M1 7 L7 1 L13 7" fill="none" stroke="#323130" stroke-width="1.3"/></svg><div class="a" style="left:298px;top:232px;width:1px;height:764px;background:#c8c6c4"></div><div class="a" style="left:301px;top:981px;width:1619px;height:1px;background:#bdbdbd"></div><div class="t " style="left:312.38px;top:992.11px;font-size:17px;line-height:17px;color:#444;transform:scaleX(1.0230);">Kliknite da biste dodali bilješke</div><div class="a" style="left:459px;top:241px;width:1282px;height:722px;background:#f0ece1;border:1px solid #c9c6c0"></div><div class="a" style="left:539px;top:320px;width:344px;height:40px;background:#1d1a0e"></div><div class="a" style="left:539px;top:320px;width:43px;height:463px;background:#1d1a0e"></div><div class="a" style="left:1617px;top:419px;width:43px;height:463px;background:#1d1a0e"></div><div class="a" style="left:1316px;top:842px;width:344px;height:40px;background:#1d1a0e"></div><div class="t " style="left:753.30px;top:444.03px;font-size:93.5px;line-height:93.5px;color:#1d1a0e;transform:scaleX(0.8100);letter-spacing:3.373px;">VOLONTIRANJE U</div><div class="t " style="left:695.33px;top:547.23px;font-size:93.5px;line-height:93.5px;color:#1d1a0e;transform:scaleX(0.8100);letter-spacing:3.681px;">PALIJATIVNOJ SKRBI</div><div class="t " style="left:900.66px;top:675.60px;font-size:30px;line-height:30px;color:#1d1a0e;transform:scaleX(0.9677);clip-path:inset(-20px -5px 1.4px -5px)">Margareta Begić, dipl.physioth.</div><svg class="a" style="left:0;top:0" width="1920" height="996"><path d="M1042 704 L1044 702.8 L1046 704.6 L1048 702.8 L1050 704.6 L1052 702.8 L1054 704.6 L1056 702.8 L1058 704.6 L1060 702.8 L1062 704.6 L1064 702.8 L1066 704.6 L1068 702.8 L1070 704.6 L1072 702.8 L1074 704.6 L1076 702.8 L1078 704.6 L1080 702.8 L1082 704.6 L1084 702.8 L1086 704.6 L1088 702.8 L1090 704.6 L1092 702.8 L1094 704.6 L1096 702.8 L1098 704.6 L1100 702.8 L1102 704.6 L1104 702.8 L1106 704.6 L1108 702.8 L1110 704.6 L1112 702.8 L1114 704.6 L1116 702.8 L1118 704.6" fill="none" stroke="#d83a3a" stroke-width="0.9" opacity="0.9"/></svg><svg class="a" style="left:0;top:0" width="1920" height="996"><path d="M1128 704 L1130 702.8 L1132 704.6 L1134 702.8 L1136 704.6 L1138 702.8 L1140 704.6 L1142 702.8 L1144 704.6 L1146 702.8 L1148 704.6 L1150 702.8 L1152 704.6 L1154 702.8 L1156 704.6 L1158 702.8 L1160 704.6 L1162 702.8 L1164 704.6 L1166 702.8 L1168 704.6 L1170 702.8 L1172 704.6 L1174 702.8 L1176 704.6 L1178 702.8 L1180 704.6 L1182 702.8 L1184 704.6 L1186 702.8 L1188 704.6 L1190 702.8 L1192 704.6 L1194 702.8 L1196 704.6 L1198 702.8 L1200 704.6 L1202 702.8 L1204 704.6 L1206 702.8 L1208 704.6 L1210 702.8 L1212 704.6 L1214 702.8 L1216 704.6 L1218 702.8 L1220 704.6 L1222 702.8 L1224 704.6 L1226 702.8 L1228 704.6 L1230 702.8 L1232 704.6 L1234 702.8 L1236 704.6 L1238 702.8 L1240 704.6 L1242 702.8 L1244 704.6 L1246 702.8 L1248 704.6 L1250 702.8 L1252 704.6 L1254 702.8 L1256 704.6 L1258 702.8 L1260 704.6 L1262 702.8 L1264 704.6 L1266 702.8 L1268 704.6 L1270 702.8 L1272 704.6 L1274 702.8 L1276 704.6 L1278 702.8 L1280 704.6 L1282 702.8 L1284 704.6 L1286 702.8 L1288 704.6 L1290 702.8 L1292 704.6" fill="none" stroke="#d83a3a" stroke-width="0.9" opacity="0.9"/></svg><div class="a" style="left:691px;top:797px;width:37px;height:22px;border:1px solid #2a2a2a"></div><svg class="a" style="left:1088px;top:406px;" width="24" height="32" viewBox="0 0 24 32"><path d="M11.4 5.6 V9.5 M5.8 11.3 H9.3 M13.6 11.3 H17.2" stroke="#000" stroke-width="1.2"/><path d="M11.4 2.6 L8.6 5.8 H14.2 Z M2.8 11.3 L6 8.5 V14.1 Z M20 11.3 L16.8 8.5 V14.1 Z" fill="#000"/><path d="M11.4 11.4 V25.8 L14.6 22.6 L17.2 29.2 L19.6 28.2 L17 21.8 H21.6 Z" fill="#fff" stroke="#000" stroke-width="1.1" stroke-linejoin="miter"/></svg><div class="a" style="left:1900px;top:246px;width:20px;height:648px;background:linear-gradient(90deg,#dcdcdc,#d4d4d4)"></div><div class="a" style="left:1900px;top:228px;width:19px;height:18px;background:#fff;border:1px solid #c8c8c8"></div><svg class="a" style="left:1904px;top:233px;" width="10" height="6" viewBox="0 0 10 6"><path d="M0 6 L5 0.5 L10 6 Z" fill="#6e6e6e"/></svg><div class="a" style="left:1900px;top:246px;width:19px;height:34px;background:#fff;border:1px solid #c8c8c8"></div><div class="a" style="left:1900px;top:895px;width:19px;height:18px;background:#fff;border:1px solid #c8c8c8"></div><svg class="a" style="left:1904px;top:901px;" width="10" height="6" viewBox="0 0 10 6"><path d="M0 0 L5 5.5 L10 0 Z" fill="#6e6e6e"/></svg><svg class="a" style="left:1904px;top:919px;" width="10" height="11" viewBox="0 0 10 11"><path d="M0 5 L5 0 L10 5 Z M0 10.5 L5 5.5 L10 10.5 Z" fill="#6e6e6e"/></svg><svg class="a" style="left:1904px;top:940px;" width="10" height="11" viewBox="0 0 10 11"><path d="M0 0 L5 5 L10 0 Z M0 5.5 L5 10.5 L10 5.5 Z" fill="#6e6e6e"/></svg><div class="a" style="left:275px;top:246px;width:19px;height:735px;background:#dcdcdc"></div><div class="a" style="left:275px;top:228px;width:19px;height:19px;background:#fff;border:1px solid #c8c8c8"></div><svg class="a" style="left:279px;top:234px;" width="10" height="6" viewBox="0 0 10 6"><path d="M0 6 L5 0.5 L10 6 Z" fill="#6e6e6e"/></svg><div class="a" style="left:275px;top:247px;width:19px;height:222px;background:#f4f4f4;border:1px solid #c8c8c8"></div><div class="a" style="left:1600px;top:0;width:320px;height:180px;overflow:hidden;border-top-right-radius:10px;z-index:5"><div class="a" style="left:0px;top:0px;width:320px;height:180px;background:linear-gradient(90deg,#b3a89c 0%,#a39385 6%,#8e7a68 20%,#927e6c 38%,#ad9c8c 52%,#c2b4a4 62%,#cfc5b6 72%,#dcd7c9 85%,#e3dfd1 100%)"></div><div class="a" style="left:-20px;top:-20px;width:360px;height:95px;background:linear-gradient(#d8d2cd,#cbc1ba 45%,rgba(195,185,175,0) 100%);filter:blur(5px)"></div><div class="a" style="left:18px;top:55px;width:125px;height:95px;background:#725c4a;border-radius:14px;filter:blur(9px)"></div><div class="a" style="left:38px;top:98px;width:60px;height:50px;background:#7e6b4a;border-radius:10px;filter:blur(8px)"></div><div class="a" style="left:100px;top:105px;width:40px;height:45px;background:#604a3c;filter:blur(7px)"></div><div class="a" style="left:0px;top:20px;width:16px;height:160px;background:#b5aa9c;filter:blur(5px)"></div><div class="a" style="left:210px;top:0px;width:120px;height:180px;background:linear-gradient(90deg,rgba(220,214,200,0),#dcd7c9 45%,#e5e1d3);filter:blur(6px)"></div><div class="a" style="left:196px;top:40px;width:30px;height:140px;background:#bfb09e;filter:blur(9px)"></div><div class="a" style="left:128px;top:62px;width:100px;height:95px;background:#8f7664;filter:blur(9px)"></div><div class="a" style="left:137px;top:50px;width:73px;height:100px;background:#7f5a48;border-radius:50% 50% 42% 42%;filter:blur(2px)"></div><div class="a" style="left:143px;top:58px;width:61px;height:93px;background:#d9ab9a;border-radius:48% 48% 46% 46%;filter:blur(1.5px)"></div><div class="a" style="left:151px;top:61px;width:45px;height:32px;background:#e4c0b0;border-radius:50%;filter:blur(5px)"></div><div class="a" style="left:156px;top:97px;width:11px;height:5px;background:#8a605a;border-radius:50%;filter:blur(1.8px)"></div><div class="a" style="left:180px;top:97px;width:11px;height:5px;background:#8a605a;border-radius:50%;filter:blur(1.8px)"></div><div class="a" style="left:168px;top:112px;width:10px;height:12px;background:#cf9c8c;border-radius:50%;filter:blur(3px)"></div><div class="a" style="left:164px;top:132px;width:20px;height:5px;background:#bd857a;border-radius:50%;filter:blur(1.8px)"></div><div class="a" style="left:150px;top:138px;width:48px;height:25px;background:#d6a794;filter:blur(1.5px)"></div><div class="a" style="left:88px;top:160px;width:50px;height:22px;background:#46464e;filter:blur(2px)"></div><div class="a" style="left:210px;top:164px;width:26px;height:18px;background:#46464e;filter:blur(2px)"></div><svg class="a" style="left:0;top:0;filter:blur(0.8px)" width="320" height="180"><path d="M128 181 L138 156 L150 150 L172 176 L198 150 L210 156 L220 181 Z" fill="#f0ece6"/><path d="M150 150 L172 176 L198 150 Z" fill="#dcae9c"/></svg><div class="a" style="left:0px;top:148px;width:132px;height:32px;background:rgba(38,30,22,0.82)"></div><div class="t " style="left:2.72px;top:154.05px;font-size:16px;line-height:16px;color:#fff;font-weight:bold;transform:scaleX(0.9814);">Margareta Begic</div></div><div class="a" style="left:275px;top:469px;width:19px;height:527px;background:linear-gradient(90deg,#dedede,#d6d6d6)"></div><div class="t " style="left:16.15px;top:246.61px;font-size:17px;line-height:17px;color:#d35230;transform:scaleX(0.7500);">1</div><div class="a" style="left:41px;top:246px;width:212px;height:123px;border:3px solid #7d1a1a;background:#f0ece1"></div><div class="a" style="left:57.18px;top:261.32px;width:55.21px;height:6.42px;background:#1d1a0e"></div><div class="a" style="left:57.18px;top:261.32px;width:6.9px;height:74.31px;background:#1d1a0e"></div><div class="a" style="left:230.2px;top:277.21px;width:6.9px;height:74.31px;background:#1d1a0e"></div><div class="a" style="left:181.89px;top:345.1px;width:55.21px;height:6.42px;background:#1d1a0e"></div><div class="t " style="left:91.90px;top:282.60px;font-size:15px;line-height:15px;color:#2b2a22;transform:scaleX(0.8468);">VOLONTIRANJE U</div><div class="t " style="left:81.13px;top:297.70px;font-size:15px;line-height:15px;color:#2b2a22;transform:scaleX(0.8708);">PALIJATIVNOJ SKRBI</div><div class="t " style="left:115.40px;top:319.94px;font-size:4.8px;line-height:4.8px;color:#444;transform:scaleX(0.9660);">Margareta Begić, dipl.physioth.</div><div class="a" style="left:82px;top:338px;width:6px;height:5px;border:1px solid #333"></div><div class="a" style="left:12px;top:301px;width:76px;height:25px;background:rgba(252,252,252,0.9);border:1px solid #8c8c8c;box-shadow:3px 3px 3px rgba(0,0,0,0.25)"></div><div class="t " style="left:17.72px;top:306.30px;font-size:15px;line-height:15px;color:#6e7f96;transform:scaleX(0.9769);">New Snip</div><div class="t " style="left:15.50px;top:390.11px;font-size:17px;line-height:17px;color:#5f5f5f;">2</div><div class="a" style="left:45px;top:391px;width:205px;height:117px;background:#f0ece1;border:1px solid #c9c6c0"></div><div class="a" style="left:53px;top:392px;width:4px;height:115px;background:#1d1a0e"></div><div class="t " style="left:126.50px;top:405.65px;font-size:7.5px;line-height:7.5px;color:#1e1e1e;transform:scaleX(1.1513);">Početak ...</div><div class="t " style="left:70.80px;top:433.30px;font-size:8.5px;line-height:8.5px;color:#a9a9a9;transform:scaleX(1.1822);">01</div><div class="t " style="left:88.30px;top:435.11px;font-size:4.6px;line-height:4.6px;color:#222;font-weight:bold;">Želja, ali ne ideja gdje</div><div class="t " style="left:88.30px;top:441.11px;font-size:4.6px;line-height:4.6px;color:#222;font-weight:bold;">volontirati</div><div class="t " style="left:158.80px;top:433.30px;font-size:8.5px;line-height:8.5px;color:#a9a9a9;transform:scaleX(1.1822);">02</div><div class="t " style="left:176.30px;top:435.11px;font-size:4.6px;line-height:4.6px;color:#222;font-weight:bold;">2011. godine CERAMET –</div><div class="t " style="left:176.30px;top:441.11px;font-size:4.6px;line-height:4.6px;color:#222;font-weight:bold;">predavanje o palijativnoj</div><div class="t " style="left:176.30px;top:447.11px;font-size:4.6px;line-height:4.6px;color:#222;font-weight:bold;">skrbi</div><div class="t " style="left:70.80px;top:463.30px;font-size:8.5px;line-height:8.5px;color:#a9a9a9;transform:scaleX(1.1822);">03</div><div class="t " style="left:88.30px;top:465.11px;font-size:4.6px;line-height:4.6px;color:#222;font-weight:bold;">Moj prvi korak u</div><div class="t " style="left:88.30px;top:471.11px;font-size:4.6px;line-height:4.6px;color:#222;font-weight:bold;">palijativnoj skrbi</div><div class="t " style="left:158.80px;top:463.30px;font-size:8.5px;line-height:8.5px;color:#a9a9a9;transform:scaleX(1.1822);">04</div><div class="t " style="left:176.30px;top:467.61px;font-size:4.6px;line-height:4.6px;color:#222;font-weight:bold;">Edukacija</div><div class="a" style="left:237px;top:497px;width:72px;height:25px;background:#fff;border:1px solid #a0a0a0"></div><div class="t " style="left:240.57px;top:502.30px;font-size:15px;line-height:15px;color:#4a4a4a;transform:scaleX(0.9316);">Početak ...</div><div class="t " style="left:15.50px;top:532.11px;font-size:17px;line-height:17px;color:#5f5f5f;">3</div><svg class="a" style="left:12px;top:551px;" width="14" height="13" viewBox="0 0 14 13"><path d="M7 0.5 L8.8 4.8 L13.3 5 L9.8 8 L11 12.5 L7 10 L3 12.5 L4.2 8 L0.7 5 L5.2 4.8 Z" fill="#5f5f5f"/></svg><div class="a" style="left:45px;top:533px;width:205px;height:117px;background:#f0ece1;border:1px solid #c9c6c0"></div><div class="a" style="left:53px;top:534px;width:4px;height:115px;background:#1d1a0e"></div><div class="t " style="left:123.50px;top:545.54px;font-size:9.5px;line-height:9.5px;color:#222;font-family:'Liberation Serif',serif;transform:scaleX(1.0105);">Edukacija...</div><div class="a" style="left:64px;top:581.0px;width:1.6px;height:1.6px;background:#222"></div><div class="t " style="left:70.50px;top:579.31px;font-size:5px;line-height:5px;color:#222;font-weight:bold;font-family:'Liberation Serif',serif;font-style:italic;">Naobrazba za volontere</div><div class="a" style="left:64px;top:595.0px;width:1.6px;height:1.6px;background:#222"></div><div class="t " style="left:69.50px;top:593.31px;font-size:5px;line-height:5px;color:#222;font-weight:bold;font-family:'Liberation Serif',serif;font-style:italic;">O palijativnoj skrbi</div><div class="a" style="left:64px;top:601.5px;width:1.6px;height:1.6px;background:#222"></div><div class="t " style="left:69.50px;top:599.81px;font-size:5px;line-height:5px;color:#222;font-weight:bold;font-family:'Liberation Serif',serif;font-style:italic;">Totalnoj boli</div><div class="a" style="left:64px;top:608.0px;width:1.6px;height:1.6px;background:#222"></div><div class="t " style="left:69.50px;top:606.31px;font-size:5px;line-height:5px;color:#222;font-weight:bold;font-family:'Liberation Serif',serif;font-style:italic;">Psihosocijalnoj podršci</div><div class="a" style="left:64px;top:615.0px;width:1.6px;height:1.6px;background:#222"></div><div class="t " style="left:70.50px;top:613.31px;font-size:5px;line-height:5px;color:#222;font-weight:bold;font-family:'Liberation Serif',serif;font-style:italic;">Duhovnoj podršci</div><svg class="a" style="left:156px;top:566px;overflow:hidden;filter:blur(0.4px)" width="71" height="69" viewBox="0 0 71 69"><defs><filter id="bl1" x="-5%" y="-5%" width="110%" height="110%"><feGaussianBlur stdDeviation="0.7"/></filter></defs><g filter="url(#bl1)"><rect width="71" height="69" fill="#b9b1a8"/><path d="M0 0 H71 V6 H0 Z" fill="#2c2830"/><path d="M0 4 L14 4 L12 40 L0 42 Z" fill="#c23a66"/><path d="M12 6 L40 2 L46 24 L18 32 Z" fill="#3d5cb4"/><path d="M40 2 L71 1 L66 14 L48 22 Z" fill="#e2532e"/><path d="M66 1 L71 1 V12 Z" fill="#2a6ad0"/><path d="M4 30 L28 22 L36 52 L12 58 Z" fill="#3a78d8"/><path d="M24 24 L44 20 L50 56 L30 60 Z" fill="#34a0ee"/><path d="M42 22 L56 20 L60 48 L46 50 Z" fill="#e9eef6"/><path d="M56 20 L71 18 V58 L60 56 Z" fill="#5c86dc"/><path d="M0 58 H71 V69 H0 Z" fill="#3c3430"/><path d="M0 50 L20 58 L0 62 Z" fill="#a8a098"/></g></svg><div class="t " style="left:15.50px;top:674.11px;font-size:17px;line-height:17px;color:#5f5f5f;">4</div><div class="a" style="left:45px;top:675px;width:205px;height:117px;background:#f0ece1;border:1px solid #c9c6c0"></div><div class="a" style="left:53px;top:676px;width:4px;height:115px;background:#1d1a0e"></div><svg class="a" style="left:71px;top:703px;overflow:hidden;filter:blur(0.5px)" width="55" height="74" viewBox="0 0 55 74"><rect width="55" height="74" fill="#b3aba6"/><rect x="0" y="0" width="55" height="30" fill="#c9c2bd"/><rect x="38" y="0" width="17" height="60" fill="#a9a39e"/><rect x="0" y="58" width="55" height="16" fill="#d2cbc4"/><circle cx="24" cy="6" r="7" fill="#efeae6"/><circle cx="6" cy="12" r="5" fill="#e6e0dc"/><rect x="18" y="13" width="18" height="45" fill="#8cc0cc"/><rect x="19" y="17" width="15" height="10" fill="#c86688"/><rect x="7" y="20" width="9" height="42" rx="3" fill="#cbbfae"/><rect x="9" y="60" width="4" height="8" fill="#2a2422"/><circle cx="11" cy="21" r="3.5" fill="#c8a888"/><rect x="32" y="26" width="13" height="40" rx="3" fill="#24222a"/><circle cx="38" cy="22" r="3.5" fill="#b88870"/></svg><svg class="a" style="left:147px;top:708px;overflow:hidden;filter:blur(0.5px)" width="85" height="64" viewBox="0 0 85 64"><rect width="85" height="64" fill="#6a696c"/><rect x="0" y="0" width="85" height="6" fill="#2c2b30"/><rect x="60" y="6" width="25" height="50" fill="#8e8b88"/><circle cx="75" cy="18" r="6" fill="#a8a49e"/><rect x="8" y="8" width="43" height="31" fill="#b4c0cc"/><rect x="30" y="12" width="14" height="12" fill="#8a9aa8"/><rect x="20" y="40" width="20" height="14" fill="#8a8a90"/><rect x="0" y="50" width="85" height="14" fill="#2e2c34"/><ellipse cx="19" cy="62" rx="12" ry="7" fill="#c8b49c"/><circle cx="8" cy="51" r="4" fill="#3a3438"/><circle cx="46" cy="49" r="4" fill="#1e1c24"/><rect x="67" y="37" width="9" height="27" rx="2" fill="#d23c32"/><circle cx="71.5" cy="36" r="2.5" fill="#b08070"/></svg><div class="t " style="left:15.50px;top:816.11px;font-size:17px;line-height:17px;color:#5f5f5f;">5</div><div class="a" style="left:45px;top:817px;width:205px;height:117px;background:#f0ece1;border:1px solid #c9c6c0"></div><div class="a" style="left:53px;top:818px;width:4px;height:115px;background:#1d1a0e"></div><div class="t " style="left:75.90px;top:858.94px;font-size:7px;line-height:7px;color:#262626;font-family:'Liberation Serif',serif;font-style:italic;transform:scaleX(1.1257);">Što dublje poniremo u prirodne znanosti, kao</div><div class="t " style="left:87.00px;top:867.94px;font-size:7px;line-height:7px;color:#262626;font-family:'Liberation Serif',serif;font-style:italic;transform:scaleX(1.1241);">da se sve više bojimo i kao da poričemo</div><div class="t " style="left:122.20px;top:876.74px;font-size:7px;line-height:7px;color:#262626;font-family:'Liberation Serif',serif;font-style:italic;transform:scaleX(1.1255);">stvarnost smrti?”</div><div class="t " style="left:72.36px;top:903.30px;font-size:8px;line-height:8px;color:#222;font-family:'Liberation Serif',serif;font-style:italic;transform:scaleX(1.1068);">E.K.Ross</div><div class="t " style="left:15.50px;top:958.11px;font-size:17px;line-height:17px;color:#5f5f5f;">6</div><svg class="a" style="left:12px;top:977px;" width="14" height="13" viewBox="0 0 14 13"><path d="M7 0.5 L8.8 4.8 L13.3 5 L9.8 8 L11 12.5 L7 10 L3 12.5 L4.2 8 L0.7 5 L5.2 4.8 Z" fill="#5f5f5f"/></svg><div class="a" style="left:45px;top:959px;width:205px;height:40px;background:#f0ece1;border:1px solid #c9c6c0"></div><div class="a" style="left:53px;top:960px;width:4px;height:40px;background:#1d1a0e"></div><div class="t " style="left:63.40px;top:971.88px;font-size:8.5px;line-height:8.5px;color:#222;font-family:'Liberation Serif',serif;transform:scaleX(1.0879);">Timska suradnja...</div><svg class="a" style="left:151.6px;top:987px;overflow:hidden" width="72" height="9" viewBox="0 0 72 9"><rect width="72" height="9" fill="#b4c8ac"/><rect x="0" y="0" width="72" height="3" fill="#c8d4c0"/><circle cx="30" cy="8" r="3.2" fill="#2a2420"/><circle cx="43" cy="9" r="3" fill="#2a2420"/><circle cx="60" cy="5.5" r="3.4" fill="#3a2a22"/><rect x="0" y="4" width="14" height="5" fill="#8aa878"/></svg><div class="t " style="left:68.00px;top:989.81px;font-size:5px;line-height:5px;color:#333;font-family:'Liberation Serif',serif;font-style:italic;">Uloga tima u palijativnoj</div>
</body></html>
